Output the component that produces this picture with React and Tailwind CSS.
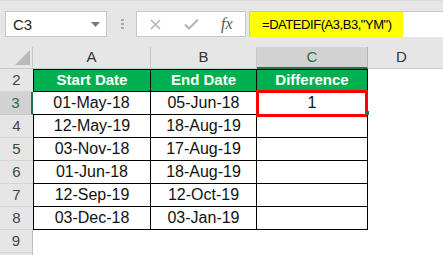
export default function App() {
  const rows = [
    ["3", "01-May-18", "05-Jun-18", "1"],
    ["4", "12-May-19", "18-Aug-19", ""],
    ["5", "03-Nov-18", "17-Aug-19", ""],
    ["6", "01-Jun-18", "18-Aug-19", ""],
    ["7", "12-Sep-19", "12-Oct-19", ""],
    ["8", "03-Dec-18", "03-Jan-19", ""],
  ];
  return (
    <div className="w-[443px] h-[255px] overflow-hidden bg-white font-['Liberation_Sans',Arial,sans-serif] text-[#222]">
      {/* toolbar */}
      <div className="h-[47px] bg-[#e6e6e6] border-t border-[#dadada] flex items-start pt-[10px]">
        <div className="ml-[5px] w-[102px] h-[26px] border border-[#c6c6c6] bg-white flex items-center justify-between pl-[7px] pr-[6px]">
          <span className="text-[15px] leading-none">C3</span>
          <svg width="9" height="5" viewBox="0 0 9 5"><path d="M0 0H9L4.5 5Z" fill="#777" /></svg>
        </div>
        <div className="ml-[14px] mt-[8px] flex flex-col gap-[2px]">
          <div className="w-[3px] h-[2px] bg-[#a8a8a8]" />
          <div className="w-[3px] h-[2px] bg-[#a8a8a8]" />
          <div className="w-[3px] h-[2px] bg-[#a8a8a8]" />
        </div>
        <div className="ml-[12px] w-[110px] h-[26px] border border-[#c6c6c6] bg-white flex items-center">
          <svg className="ml-[13px]" width="11" height="11" viewBox="0 0 11 11"><path d="M1 1L10 10M10 1L1 10" stroke="#b4b4b4" strokeWidth="1.6" /></svg>
          <svg className="ml-[23px]" width="15" height="12" viewBox="0 0 15 12"><path d="M1 6.5L5 10.5L14 1.5" stroke="#b4b4b4" strokeWidth="2" fill="none" /></svg>
          <span className="ml-[22px] font-['Liberation_Serif',serif] italic text-[16px] leading-none text-[#555]">fx</span>
        </div>
        <div className="ml-[3px] flex-1 h-[26px] border-t border-l border-[#c6c6c6] bg-white flex items-stretch">
          <div className="w-[153px] bg-[#ffff00] flex items-center pl-[12px]">
            <span className="text-[13px] tracking-[-0.45px] text-black leading-none">=DATEDIF(A3,B3,"YM")</span>
          </div>
        </div>
      </div>

      {/* column headers */}
      <div className="h-[22px] flex bg-[#e6e6e6] text-[15px] text-[#333]">
        <div className="w-[33px] border-r border-b border-[#c8c8c8] relative">
          <svg className="absolute left-[15px] top-[3px]" width="15" height="15" viewBox="0 0 15 15"><path d="M15 0V15H0Z" fill="#b9b9b9" /></svg>
        </div>
        <div className="w-[118px] border-r border-b border-[#c8c8c8] flex items-center justify-center">A</div>
        <div className="w-[106px] border-r border-b border-[#c8c8c8] flex items-center justify-center">B</div>
        <div className="w-[111px] border-r border-[#b4b4b4] border-b-2 border-b-[#217346] bg-[#d2d2d2] text-[#217346] flex items-center justify-center">C</div>
        <div className="flex-1 border-b border-[#c8c8c8] flex items-center justify-center pr-[8px]">D</div>
      </div>

      {/* header row 2 */}
      <div className="h-[23px] flex">
        <div className="w-[33px] bg-[#e6e6e6] border-b border-[#d4d4d4] text-[15px] text-[#444] flex items-center justify-center">2</div>
        <div className="w-[118px] border-l border-t border-r border-b border-black bg-[#00b050] text-white font-bold text-[15px] flex items-center justify-center">Start Date</div>
        <div className="w-[106px] border-t border-r border-b border-black bg-[#00b050] text-white font-bold text-[15px] flex items-center justify-center">End Date</div>
        <div className="w-[111px] border-t border-r border-b border-black bg-[#00b050] text-white font-bold text-[15px] flex items-center justify-center">Difference</div>
        <div className="flex-1" />
      </div>

      {rows.map((r) => {
        const sel = r[0] === "3";
        return (
          <div key={r[0]} className="h-[23px] flex">
            <div className={sel
              ? "w-[33px] bg-[#d2d2d2] border-b border-[#c8c8c8] border-r-2 border-r-[#217346] text-[15px] text-[#217346] flex items-center justify-center"
              : "w-[33px] bg-[#e6e6e6] border-b border-[#d4d4d4] text-[15px] text-[#444] flex items-center justify-center"}>{r[0]}</div>
            <div className={sel
              ? "w-[118px] border-r border-b border-black text-[16px] text-[#111] flex items-center justify-center"
              : "w-[118px] border-l border-r border-b border-black text-[16px] text-[#111] flex items-center justify-center"}>{r[1]}</div>
            <div className="w-[106px] border-r border-b border-black text-[16px] text-[#111] flex items-center justify-center">{r[2]}</div>
            <div className="w-[111px] border-r border-b border-black text-[16px] text-[#111] flex items-center justify-center relative">
              {r[3]}
              {sel && (
                <>
                  <div className="absolute left-[-1px] top-[-2px] w-[112px] h-[27px] border-[3px] border-[#ff0000]" />
                  <div className="absolute left-[108px] top-[19px] w-[4px] h-[4px] bg-[#217346]" />
                </>
              )}
            </div>
            <div className="flex-1" />
          </div>
        );
      })}

      <div className="h-[23px] flex">
        <div className="w-[33px] bg-[#e6e6e6] border-b border-r border-[#d4d4d4] border-r-[#bdbdbd] text-[15px] text-[#444] flex items-center justify-center">9</div>
        <div className="flex-1" />
      </div>
      <div className="h-[10px] flex">
        <div className="w-[33px] bg-[#e6e6e6] border-r border-[#bdbdbd]" />
        <div className="flex-1" />
      </div>
    </div>
  );
}
